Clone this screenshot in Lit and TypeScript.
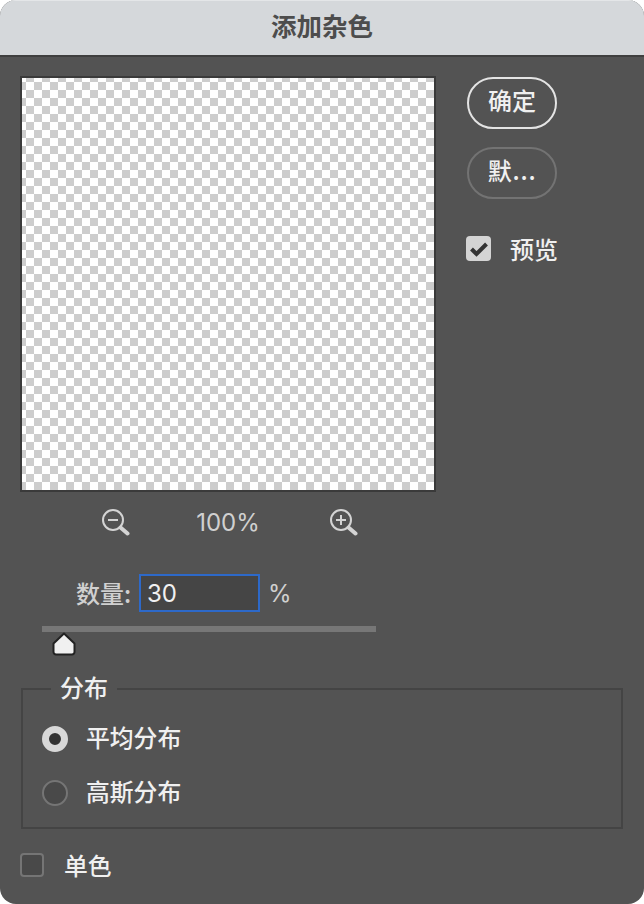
import { LitElement, html, css } from "lit";
import { customElement } from "lit/decorators.js";

@customElement("app-root")
export class AppRoot extends LitElement {
  static styles = css`
    :host { display: block; width: 644px; height: 904px; background: #fff; font-family: "Noto Sans CJK SC", "Noto Sans", sans-serif; }
    .dialog { width: 644px; height: 904px; box-sizing: border-box; background: #535353; border-radius: 16px; overflow: hidden; color: #e8e8e8; display: flex; flex-direction: column; }
    .title { height: 57px; box-sizing: border-box; flex: none; background: #d5d8db; border-top: 1px solid #e4e6e8; border-bottom: 2px solid #3f3f3f; display: flex; align-items: center; justify-content: center; font-size: 25.5px; line-height: 1; font-weight: 700; color: #4d4d4d; padding-bottom: 7px; }
    .body { flex: 1; padding: 19px 20px 0; display: flex; flex-direction: column; }
    .top { display: flex; }
    .left { width: 416px; flex: none; }
    .preview { width: 416px; height: 416px; box-sizing: border-box; border: 2px solid #3a3a3a; background-color: #fff; background-image: conic-gradient(#cdcdcd 25%, #fff 25% 50%, #cdcdcd 50% 75%, #fff 75%); background-size: 16px 16px; background-position: -4px -4px; }
    .zoombar { display: flex; align-items: center; height: 62px; padding-left: 80px; }
    .zoombar svg { width: 30px; height: 30px; flex: none; display: block; }
    .pct { width: 198px; box-sizing: border-box; padding-right: 2px; text-align: center; font-family: Inter, sans-serif; font-size: 24px; line-height: 1; color: #d0d0d0; }
    .side { margin: 1px 0 0 31px; display: flex; flex-direction: column; align-items: flex-start; }
    .btn { width: 90px; height: 52px; box-sizing: border-box; border-radius: 26px; border: 2px solid #e4e4e4; display: flex; align-items: center; justify-content: center; font-size: 24px; font-weight: 500; line-height: 1; color: #f0f0f0; padding-bottom: 6px; margin-bottom: 18px; }
    .btn.alt { border-color: #737373; letter-spacing: 0.8px; }
    .check { display: flex; align-items: center; margin: 19px 0 0 -1px; font-size: 24px; font-weight: 500; color: #f0f0f0; }
    .box { width: 25px; height: 25px; box-sizing: border-box; border-radius: 4px; background: #d4d4d4; display: flex; align-items: center; justify-content: center; margin-right: 19px; flex: none; }
    .box svg { width: 18px; height: 18px; display: block; }
    .box.off { width: 24px; height: 24px; background: #494949; border: 2px solid #757575; }
    .amount { display: flex; align-items: center; height: 38px; margin-top: 20px; padding-left: 56px; font-size: 24px; font-weight: 500; color: #d0d0d0; }
    .amount .lab { width: 63px; white-space: nowrap; }
    .field { width: 121px; height: 38px; box-sizing: border-box; border: 2px solid #2d69c9; background: #454545; padding-left: 6px; color: #f0f0f0; font-family: Inter, sans-serif; font-size: 24px; font-weight: 400; display: flex; align-items: center; }
    .unit { margin: 2px 0 0 8px; font-family: Inter, sans-serif; font-size: 24px; font-weight: 400; color: #d0d0d0; }
    .slider { position: relative; margin: 14px 0 0 22px; width: 334px; height: 6px; background: #777; }
    .thumb { position: absolute; left: 9px; top: 5px; display: block; width: 26px; height: 26px; }
    .group { position: relative; margin: 56px 0 0 1px; height: 141px; width: 602px; box-sizing: border-box; border: 2px solid #444; padding: 36px 19px 0; }
    .legend { position: absolute; left: 28px; top: -19px; background: #535353; padding: 0 9px; font-size: 24px; font-weight: 500; line-height: 32px; color: #f0f0f0; }
    .radio { display: flex; align-items: center; height: 26px; font-size: 23.8px; font-weight: 500; margin-bottom: 28px; color: #f0f0f0; }
    .radio span { padding-bottom: 4px; }
    .dot { width: 26px; height: 26px; box-sizing: border-box; border-radius: 50%; margin-right: 18px; flex: none; border: 2px solid #757575; background: #494949; }
    .dot.on { border: 7.5px solid #d8d8d8; background: #333; }
    .mono { display: flex; align-items: center; margin-top: 24px; font-size: 23.8px; font-weight: 500; color: #f0f0f0; }
    .mono .box { margin-right: 20px; }
    span { line-height: 1; }
  `;

  render() {
    return html`<div class="dialog">
      <div class="title">添加杂色</div>
      <div class="body">
        <div class="top">
          <div class="left">
            <div class="preview"></div>
            <div class="zoombar">
              <svg viewBox="0 0 30 30" fill="none" stroke="#d4d4d4"><circle cx="13" cy="12" r="10" stroke-width="2"/><path d="M8 12h10" stroke-width="2"/><path d="M20.5 19.5l7 6" stroke-width="4" stroke-linecap="round"/></svg>
              <div class="pct">100%</div>
              <svg viewBox="0 0 30 30" fill="none" stroke="#d4d4d4"><circle cx="13" cy="12" r="10" stroke-width="2"/><path d="M8 12h10M13 7v10" stroke-width="2"/><path d="M20.5 19.5l7 6" stroke-width="4" stroke-linecap="round"/></svg>
            </div>
          </div>
          <div class="side">
            <div class="btn">确定</div>
            <div class="btn alt">默...</div>
            <div class="check">
              <div class="box"><svg viewBox="0 0 18 18" fill="none" stroke="#333" stroke-width="4"><path d="M1.5 9l5 5L16.5 4"/></svg></div>
              <span>预览</span>
            </div>
          </div>
        </div>
        <div class="amount"><span class="lab">数量:</span><div class="field">30</div><span class="unit">%</span></div>
        <div class="slider"><svg class="thumb" viewBox="0 0 26 26"><path d="M13 2.5L23.5 12.5V21a2.5 2.5 0 0 1-2.5 2.5H5A2.5 2.5 0 0 1 2.5 21V12.5Z" fill="#f0f0f0" stroke="#222" stroke-width="2" stroke-linejoin="round"/></svg></div>
        <div class="group">
          <div class="legend">分布</div>
          <div class="radio"><div class="dot on"></div><span>平均分布</span></div>
          <div class="radio"><div class="dot"></div><span>高斯分布</span></div>
        </div>
        <div class="mono"><div class="box off"></div><span>单色</span></div>
      </div>
    </div>`;
  }
}
